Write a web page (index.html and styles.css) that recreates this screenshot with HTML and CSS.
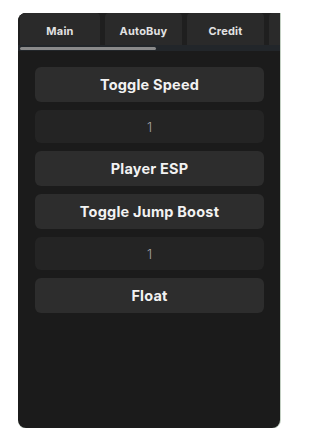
FILE: index.html
```html
<!DOCTYPE html>
<html>
<head>
<meta charset="utf-8">
<link rel="stylesheet" href="styles.css">
</head>
<body>
<div class="frame">
  <div class="tabbar">
    <div class="tabs">
      <div class="tab tab-first">Main</div>
      <div class="tab">AutoBuy</div>
      <div class="tab">Credit</div>
      <div class="tab"></div>
    </div>
    <div class="track"><div class="thumb"></div></div>
  </div>
  <div class="content">
    <div class="btn">Toggle Speed</div>
    <div class="box">1</div>
    <div class="btn">Player ESP</div>
    <div class="btn">Toggle Jump Boost</div>
    <div class="box">1</div>
    <div class="btn">Float</div>
  </div>
</div>
</body>
</html>
```
FILE: styles.css
```css
html, body {
  margin: 0;
  padding: 0;
  background: #ffffff;
}
body {
  padding: 13px 0 0 18px;
  font-family: Inter, "Noto Sans", sans-serif;
}
.frame {
  width: 262px;
  height: 415px;
  background: #1b1b1b;
  border-radius: 8px 0 8px 8px;
  overflow: hidden;
  box-shadow: 1px 0 0 #c3d0c3, 0 1px 0 #d5ddd5;
}
.tabbar {
  background: #1f1f1f;
}
.tabs {
  display: flex;
  gap: 5px;
  padding-left: 2px;
  height: 32px;
  overflow: hidden;
}
.tab {
  flex: 0 0 77px;
  background: #2a2a2a;
  color: #e2e2e2;
  font-size: 11px;
  font-weight: 700;
  letter-spacing: 0.2px;
  display: flex;
  align-items: center;
  justify-content: center;
  padding-top: 4px;
  box-sizing: border-box;
  border-radius: 4px 4px 0 0;
}
.tab-first {
  flex-basis: 80px;
}
.track {
  height: 6px;
  padding: 2px 0 0 2px;
  box-sizing: border-box;
  background: #22262a;
}
.thumb {
  width: 136px;
  height: 3px;
  background: #8a8a8a;
  border-radius: 2px;
}
.content {
  display: flex;
  flex-direction: column;
  gap: 8px;
  padding: 16px 16px 0 17px;
}
.btn {
  height: 35px;
  background: #2d2d2d;
  border-radius: 6px;
  color: #f2f2f2;
  font-size: 14.5px;
  font-weight: 700;
  letter-spacing: 0.2px;
  display: flex;
  align-items: center;
  justify-content: center;
}
.box {
  height: 33px;
  background: #242424;
  border-radius: 6px;
  color: #a5a5a5;
  font-size: 13px;
  font-weight: 300;
  display: flex;
  align-items: center;
  justify-content: center;
}
```
